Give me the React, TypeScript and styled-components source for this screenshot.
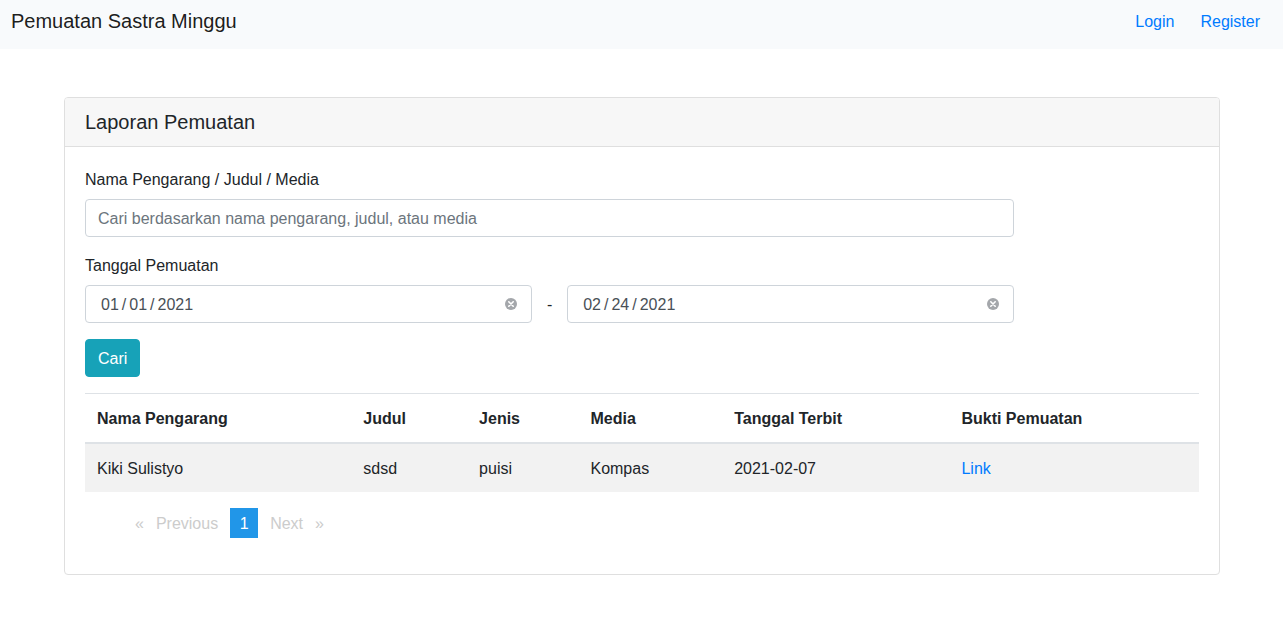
import React, { useState } from "react";
import styled, { createGlobalStyle } from "styled-components";

const GlobalStyle = createGlobalStyle`
  *, *::before, *::after {
    box-sizing: border-box;
  }

  body {
    margin: 0;
    background: #fff;
    color: #212529;
    font-family: "Liberation Sans", Arial, sans-serif;
    font-size: 16px;
    line-height: 24px;
  }
`;

const Navbar = styled.header`
  display: flex;
  align-items: flex-start;
  justify-content: space-between;
  padding: 9px 23px 16px 11px;
  background: #f8fafc;
`;

const Brand = styled.a`
  color: rgba(0, 0, 0, 0.9);
  font-size: 20px;
  text-decoration: none;
`;

const NavLinks = styled.nav`
  display: flex;
  gap: 26px;
  line-height: 26px;
  margin-bottom: -2px;
`;

const TextLink = styled.a`
  color: #007bff;
  text-decoration: none;

  &:hover {
    text-decoration: underline;
  }
`;

const Page = styled.main`
  padding: 48px 63px 48px 64px;
`;

const Card = styled.section`
  border: 1px solid #dfdfdf;
  border-radius: 4px;
  overflow: hidden;
`;

const CardTitle = styled.h1`
  margin: 0;
  padding: 12px 20px;
  border-bottom: 1px solid #dfdfdf;
  background: #f7f7f7;
  font-size: 20px;
  font-weight: 400;
  line-height: 24px;
`;

const CardBody = styled.div`
  padding: 20px;
`;

const SearchForm = styled.form`
  display: flex;
  flex-direction: column;
  align-items: flex-start;
  gap: 16px;
  margin-bottom: 16px;
`;

const Field = styled.div`
  display: flex;
  flex-direction: column;
  gap: 6px;
  width: 83.4%;
`;

const Label = styled.label`
  line-height: 26px;
`;

const Control = styled.input`
  display: block;
  width: 100%;
  height: 38px;
  padding: 7px 12px 5px;
  border: 1px solid #ced4da;
  border-radius: 4px;
  background: #fff;
  color: #495057;
  font: inherit;

  &::placeholder {
    color: #6c757d;
    opacity: 1;
  }
`;

const DateRange = styled.div`
  display: flex;
  align-items: center;
  gap: 15px;
`;

const DateBox = styled.div`
  position: relative;
  flex: 1;
`;

const DateControl = styled(Control)`
  padding-left: 14px;

  &::-webkit-calendar-picker-indicator {
    display: none;
  }

  &::-webkit-datetime-edit-text {
    padding: 0 2px;
  }
`;

const Separator = styled.span`
  padding-top: 2px;
`;

const ClearButton = styled.button`
  position: absolute;
  top: 13px;
  right: 15px;
  display: flex;
  padding: 0;
  border: 0;
  background: none;
  color: #a4a7ab;
  cursor: pointer;
`;

const SubmitButton = styled.button`
  padding: 7px 12px 5px;
  border: 1px solid #17a2b8;
  border-radius: 4px;
  background: #17a2b8;
  color: #fff;
  font: inherit;
  cursor: pointer;
`;

const Table = styled.table`
  width: 100%;
  margin-bottom: 16px;
  border-collapse: collapse;
  table-layout: fixed;
  text-align: left;

  th,
  td {
    padding: 13px 12px 11px;
  }

  thead th {
    border-top: 1px solid #dee2e6;
    border-bottom: 2px solid #dee2e6;
  }

  tbody tr:nth-of-type(odd) {
    background: #f2f2f2;
  }
`;

const Column = styled.col<{ $share: number }>`
  width: ${({ $share }) => $share}%;
`;

const Pagination = styled.nav`
  display: flex;
  align-items: center;
  gap: 12px;
  margin-bottom: 16px;
  padding-left: 50px;
`;

const PageButton = styled.button<{ $active?: boolean }>`
  height: 30px;
  min-width: ${({ $active }) => ($active ? "28px" : "0")};
  padding: 2px 0 0;
  border: 0;
  background: ${({ $active }) => ($active ? "#2196e8" : "none")};
  color: ${({ $active }) => ($active ? "#fff" : "#ccc")};
  font: inherit;
`;

const columns = [
  { title: "Nama Pengarang", share: 23.9 },
  { title: "Judul", share: 10.4 },
  { title: "Jenis", share: 10 },
  { title: "Media", share: 12.9 },
  { title: "Tanggal Terbit", share: 20.4 },
  { title: "Bukti Pemuatan", share: 22.4 },
];

const works = [
  { author: "Kiki Sulistyo", title: "sdsd", kind: "puisi", media: "Kompas", date: "2021-02-07" },
];

function DateInput({ id, label, initial }: { id: string; label: string; initial: string }) {
  const [value, setValue] = useState(initial);
  return (
    <DateBox>
      <DateControl
        id={id}
        type="date"
        aria-label={label}
        value={value}
        onChange={(e) => setValue(e.target.value)}
      />
      <ClearButton type="button" aria-label="Hapus tanggal" onClick={() => setValue("")}>
        <svg width="12" height="12" viewBox="0 0 12 12" aria-hidden="true">
          <circle cx="6" cy="6" r="6" fill="currentColor" />
          <path d="M3.8 3.8l4.4 4.4M8.2 3.8L3.8 8.2" stroke="#fff" strokeWidth="1.6" strokeLinecap="round" />
        </svg>
      </ClearButton>
    </DateBox>
  );
}

export default function App() {
  return (
    <>
      <GlobalStyle />
      <Navbar>
        <Brand href="#">Pemuatan Sastra Minggu</Brand>
        <NavLinks>
          <TextLink href="#login">Login</TextLink>
          <TextLink href="#register">Register</TextLink>
        </NavLinks>
      </Navbar>
      <Page>
        <Card>
          <CardTitle>Laporan Pemuatan</CardTitle>
          <CardBody>
            <SearchForm onSubmit={(e) => e.preventDefault()}>
              <Field>
                <Label htmlFor="keyword">Nama Pengarang / Judul / Media</Label>
                <Control
                  id="keyword"
                  type="text"
                  placeholder="Cari berdasarkan nama pengarang, judul, atau media"
                />
              </Field>
              <Field>
                <Label htmlFor="date-from">Tanggal Pemuatan</Label>
                <DateRange>
                  <DateInput id="date-from" label="Tanggal Pemuatan awal" initial="2021-01-01" />
                  <Separator>-</Separator>
                  <DateInput id="date-to" label="Tanggal Pemuatan akhir" initial="2021-02-24" />
                </DateRange>
              </Field>
              <SubmitButton type="submit">Cari</SubmitButton>
            </SearchForm>
            <Table>
              <colgroup>
                {columns.map((c) => (
                  <Column key={c.title} $share={c.share} />
                ))}
              </colgroup>
              <thead>
                <tr>
                  {columns.map((c) => (
                    <th key={c.title} scope="col">{c.title}</th>
                  ))}
                </tr>
              </thead>
              <tbody>
                {works.map((w) => (
                  <tr key={w.title}>
                    <td>{w.author}</td>
                    <td>{w.title}</td>
                    <td>{w.kind}</td>
                    <td>{w.media}</td>
                    <td>{w.date}</td>
                    <td><TextLink href="#bukti">Link</TextLink></td>
                  </tr>
                ))}
              </tbody>
            </Table>
            <Pagination aria-label="Halaman">
              <PageButton type="button" disabled aria-label="Halaman pertama">«</PageButton>
              <PageButton type="button" disabled>Previous</PageButton>
              <PageButton type="button" $active aria-current="page">1</PageButton>
              <PageButton type="button" disabled>Next</PageButton>
              <PageButton type="button" disabled aria-label="Halaman terakhir">»</PageButton>
            </Pagination>
          </CardBody>
        </Card>
      </Page>
    </>
  );
}
